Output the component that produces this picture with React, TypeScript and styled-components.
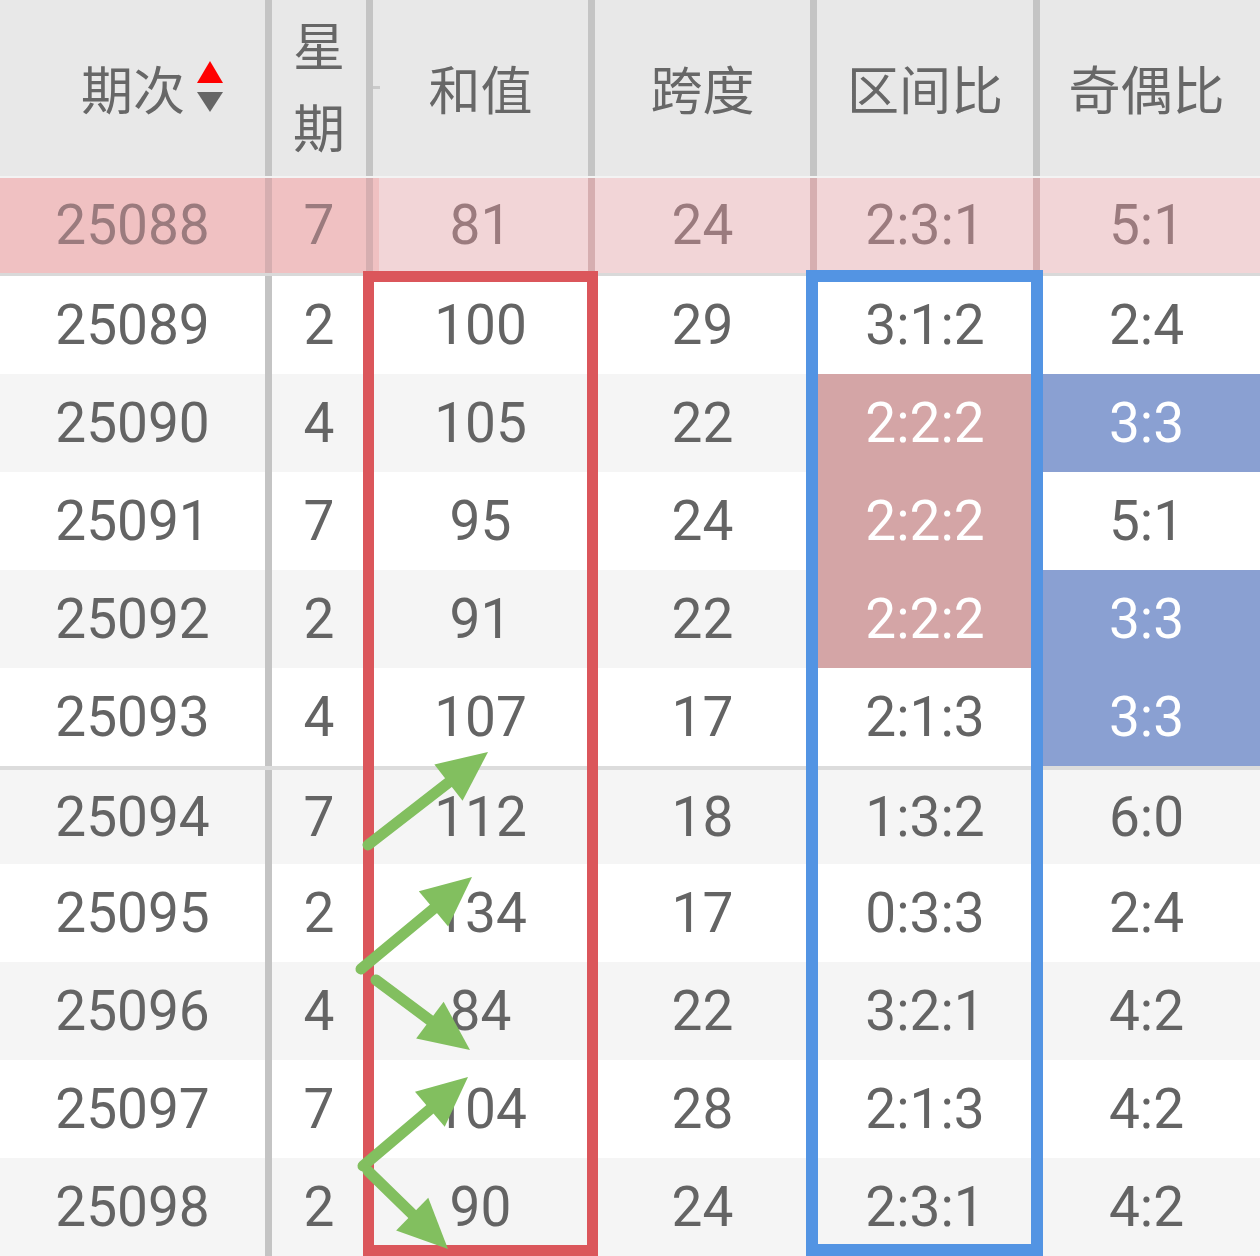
import React from "react";
import styled, { createGlobalStyle } from "styled-components";

const GlobalStyle = createGlobalStyle`
  html, body { margin: 0; padding: 0; background: #ffffff; }
  body { overflow: hidden; }
`;

const Page = styled.div`
  position: relative;
  width: 1260px;
  height: 1256px;
  overflow: hidden;
  background: #ffffff;
  font-family: Roboto, "Noto Sans", "Noto Sans CJK SC", sans-serif;
  color: #666666;
`;

const Table = styled.div`
  display: flex;
  flex-direction: column;
`;

const HeaderRow = styled.div`
  display: flex;
  height: 178px;
  box-sizing: border-box;
  background: #e8e8e8;
  border-bottom: 2px solid #f3f3f3;
`;

const Row = styled.div<{ $bg: string; $top?: boolean; $bottom?: string }>`
  display: flex;
  height: 98px;
  box-sizing: border-box;
  background: ${(p) => p.$bg};
  border-top: ${(p) => (p.$top ? "4px solid #dcdcdc" : "none")};
  border-bottom: ${(p) => (p.$bottom ? `3px solid ${p.$bottom}` : "none")};
`;

const Cell = styled.div<{
  $w: number;
  $divider?: string;
  $bg?: string;
  $color?: string;
}>`
  position: relative;
  flex: 0 0 ${(p) => p.$w}px;
  width: ${(p) => p.$w}px;
  box-sizing: border-box;
  display: flex;
  align-items: center;
  justify-content: center;
  border-right: 7px solid ${(p) => p.$divider ?? "transparent"};
  background: ${(p) => p.$bg ?? "transparent"};
  color: ${(p) => p.$color ?? "#646464"};
  font-size: 55px;
  line-height: 1;
  letter-spacing: 0;
`;

const HeadCell = styled(Cell)<{ $tick?: boolean; $end?: boolean }>`
  font-family: "Noto Sans CJK SC", "Noto Sans", sans-serif;
  font-size: 52px;
  color: #676767;
  justify-content: ${(p) => (p.$end ? "flex-end" : "center")};
  padding-right: ${(p) => (p.$end ? "42px" : "0")};
  &::before {
    content: "";
    display: ${(p) => (p.$tick ? "block" : "none")};
    position: absolute;
    left: 0;
    top: 86px;
    width: 7px;
    height: 3px;
    background: #cacaca;
  }
`;

const Stacked = styled.div`
  display: flex;
  flex-direction: column;
  align-items: center;
  line-height: 82px;
  margin-top: -6px;
`;

const SortWrap = styled.span`
  display: inline-flex;
  margin-left: 12px;
  margin-top: -2px;
`;

const Frame = styled.div<{ $color: string; $x: number; $y: number; $w: number; $h: number; $t: number }>`
  position: absolute;
  left: ${(p) => p.$x}px;
  top: ${(p) => p.$y}px;
  width: ${(p) => p.$w}px;
  height: ${(p) => p.$h}px;
  box-sizing: border-box;
  border: ${(p) => p.$t}px solid ${(p) => p.$color};
  pointer-events: none;
`;

const ArrowLayer = styled.svg`
  position: absolute;
  left: 0;
  top: 0;
  pointer-events: none;
`;

const W = [272, 101, 222, 222, 223, 220];

type R = {
  id: string;
  wk: string;
  sum: string;
  span: string;
  zone: string;
  zoneHi?: boolean;
  odd: string;
  oddHi?: boolean;
};

const rows: R[] = [
  { id: "25089", wk: "2", sum: "100", span: "29", zone: "3:1:2", odd: "2:4" },
  { id: "25090", wk: "4", sum: "105", span: "22", zone: "2:2:2", zoneHi: true, odd: "3:3", oddHi: true },
  { id: "25091", wk: "7", sum: "95", span: "24", zone: "2:2:2", zoneHi: true, odd: "5:1" },
  { id: "25092", wk: "2", sum: "91", span: "22", zone: "2:2:2", zoneHi: true, odd: "3:3", oddHi: true },
  { id: "25093", wk: "4", sum: "107", span: "17", zone: "2:1:3", odd: "3:3", oddHi: true },
  { id: "25094", wk: "7", sum: "112", span: "18", zone: "1:3:2", odd: "6:0" },
  { id: "25095", wk: "2", sum: "134", span: "17", zone: "0:3:3", odd: "2:4" },
  { id: "25096", wk: "4", sum: "84", span: "22", zone: "3:2:1", odd: "4:2" },
  { id: "25097", wk: "7", sum: "104", span: "28", zone: "2:1:3", odd: "4:2" },
  { id: "25098", wk: "2", sum: "90", span: "24", zone: "2:3:1", odd: "4:2" },
];

const arrows: [number, number, number, number][] = [
  [368, 845, 488, 752],
  [361, 969, 472, 877],
  [376, 980, 470, 1050],
  [363, 1166, 468, 1077],
  [368, 1171, 448, 1249],
];

function Arrow({ a }: { a: [number, number, number, number] }) {
  const [x1, y1, x2, y2] = a;
  const dx = x2 - x1;
  const dy = y2 - y1;
  const len = Math.hypot(dx, dy);
  const ux = dx / len;
  const uy = dy / len;
  const hl = 50;
  const hw = 23;
  const bx = x2 - ux * hl;
  const by = y2 - uy * hl;
  const px = -uy;
  const py = ux;
  const pts = `${x2},${y2} ${bx + px * hw},${by + py * hw} ${bx - px * hw},${by - py * hw}`;
  return (
    <g>
      <line
        x1={x1}
        y1={y1}
        x2={bx + ux * 6}
        y2={by + uy * 6}
        stroke="#82bf5f"
        strokeWidth={11}
        strokeLinecap="round"
      />
      <polygon points={pts} fill="#82bf5f" />
    </g>
  );
}

function SortIcon() {
  return (
    <svg width="26" height="52" viewBox="0 0 26 52">
      <polygon points="0,22 13,0 26,22" fill="#ff0000" />
      <polygon points="0,31 26,31 13,51" fill="#666666" />
    </svg>
  );
}

export default function App() {
  const pinkDark = "#f0c1c2";
  const pinkLight = "#f2d5d7";
  const pinkDiv = "#d6aeb0";
  const pinkText = "#9b7b7e";
  return (
    <Page>
      <GlobalStyle />
      <Table>
        <HeaderRow>
          <HeadCell $w={W[0]} $divider="#c4c4c4" $end>
            期次
            <SortWrap>
              <SortIcon />
            </SortWrap>
          </HeadCell>
          <HeadCell $w={W[1]} $divider="#c4c4c4">
            <Stacked>
              <span>星</span>
              <span>期</span>
            </Stacked>
          </HeadCell>
          <HeadCell $w={W[2]} $divider="#c4c4c4" $tick>
            和值
          </HeadCell>
          <HeadCell $w={W[3]} $divider="#c4c4c4">
            跨度
          </HeadCell>
          <HeadCell $w={W[4]} $divider="#c4c4c4">
            区间比
          </HeadCell>
          <HeadCell $w={W[5]}>奇偶比</HeadCell>
        </HeaderRow>

        <Row $bg={pinkLight} $bottom="#d9d9d9">
          <Cell $w={W[0]} $divider={pinkDiv} $bg={pinkDark} $color={pinkText}>25088</Cell>
          <Cell $w={W[1]} $divider={pinkDiv} $bg={pinkDark} $color={pinkText}>7</Cell>
          <Cell $w={W[2]} $divider={pinkDiv} $bg={`linear-gradient(to right, ${pinkDark} 6px, ${pinkLight} 6px)`} $color={pinkText}>81</Cell>
          <Cell $w={W[3]} $divider={pinkDiv} $color={pinkText}>24</Cell>
          <Cell $w={W[4]} $divider={pinkDiv} $color={pinkText}>2:3:1</Cell>
          <Cell $w={W[5]} $color={pinkText}>5:1</Cell>
        </Row>

        {rows.map((r, i) => (
          <Row key={r.id} $bg={i % 2 === 0 ? "#ffffff" : "#f5f5f5"} $top={r.id === "25094"}>
            <Cell $w={W[0]} $divider="#c4c4c4">{r.id}</Cell>
            <Cell $w={W[1]}>{r.wk}</Cell>
            <Cell $w={W[2]}>{r.sum}</Cell>
            <Cell $w={W[3]}>{r.span}</Cell>
            <Cell
              $w={W[4]}
              $bg={r.zoneHi ? "#d4a5a6" : undefined}
              $color={r.zoneHi ? "#ffffff" : undefined}
            >
              {r.zone}
            </Cell>
            <Cell
              $w={W[5]}
              $bg={r.oddHi ? "#8aa0d2" : undefined}
              $color={r.oddHi ? "#ffffff" : undefined}
            >
              {r.odd}
            </Cell>
          </Row>
        ))}
      </Table>

      <Frame $color="#db565b" $x={363} $y={271} $w={235} $h={985} $t={11} />
      <Frame $color="#5394e3" $x={806} $y={270} $w={237} $h={986} $t={12} />

      <ArrowLayer width={1260} height={1256} viewBox="0 0 1260 1256">
        {arrows.map((a, i) => (
          <Arrow key={i} a={a} />
        ))}
      </ArrowLayer>
    </Page>
  );
}
